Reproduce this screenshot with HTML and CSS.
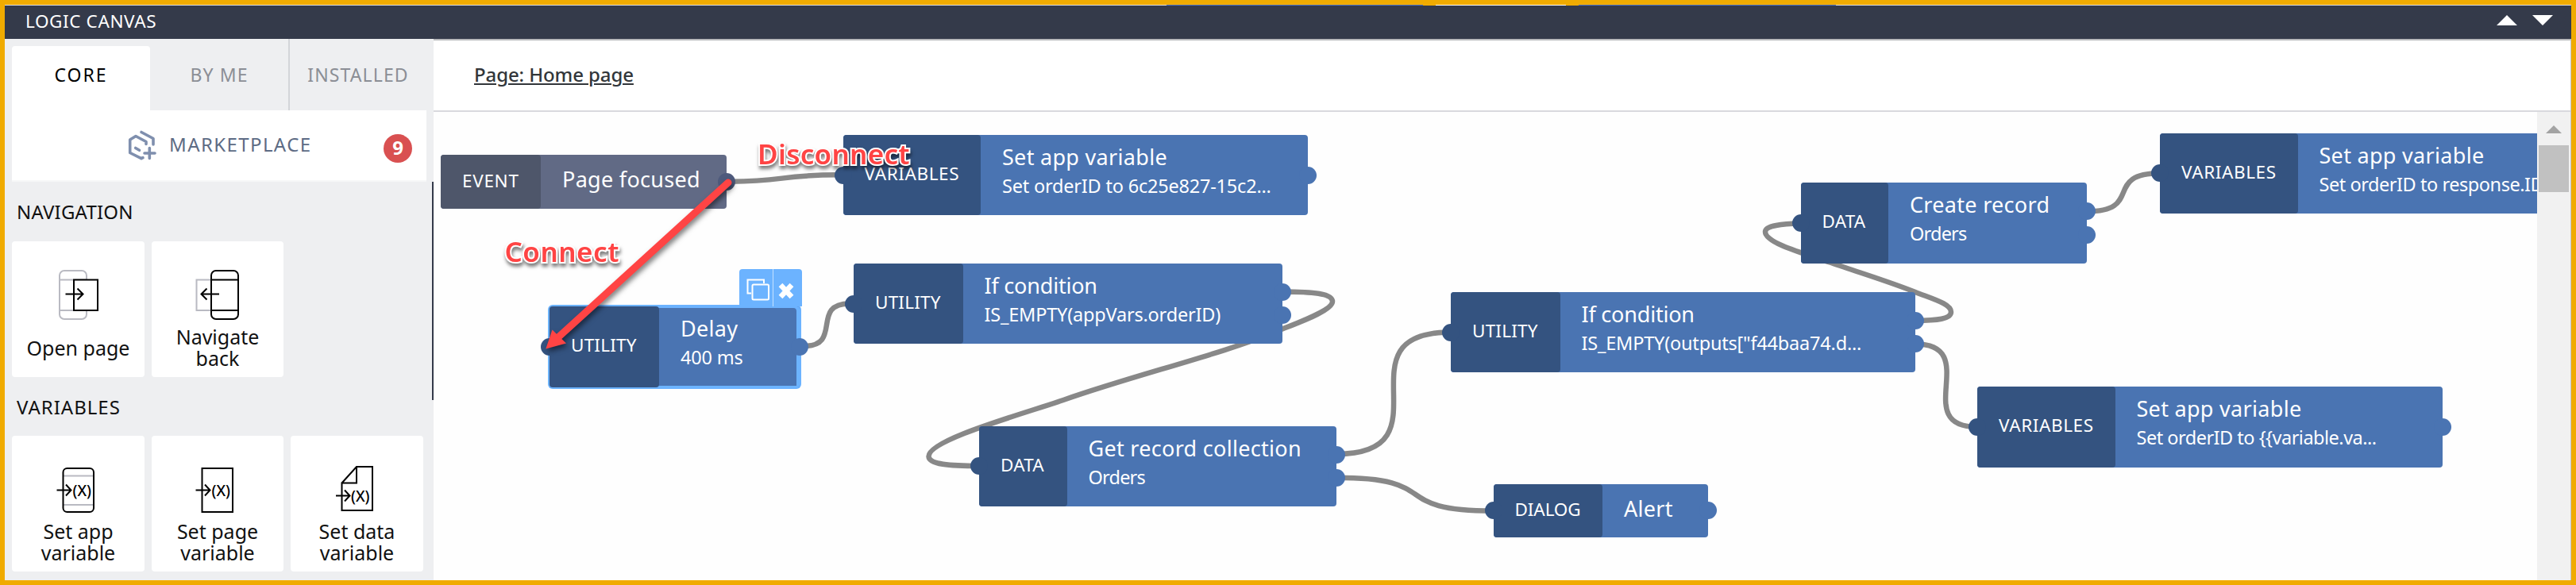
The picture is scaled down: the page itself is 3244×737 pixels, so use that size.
FILE: index.html
```html
<!DOCTYPE html>
<html lang="en">
<head>
<meta charset="utf-8">
<title>Logic canvas</title>
<link rel="stylesheet" href="styles.css">
</head>
<body>
<div class="app">
  <header class="topbar">
    <span class="topbar-title">LOGIC CANVAS</span>
    <svg class="topbar-arrows" width="72" height="13" viewBox="0 0 72 13"><path d="M0 13L13 0L26 13ZM45 0H71L58 13Z"/></svg>
  </header>
  <div class="body">
    <aside class="sidebar">
      <nav class="tabs">
        <div class="tab tab-active">CORE</div>
        <div class="tab">BY ME</div>
        <div class="tab tab-last">INSTALLED</div>
      </nav>
      <div class="market">
        <svg class="market-icon" width="36" height="38" viewBox="161 164 36 38"><path d="M178 166.500L193 174.500V182M184 181.500V178.500L171 171.500L163.700 176V192.500L178 199.700L180 198.700M170.700 186.500L175.500 189.300M182 193H195M188.300 186.500V199.500"/></svg>
        <span class="market-label">MARKETPLACE</span>
        <span class="badge">9</span>
      </div>
      <h2 class="section">NAVIGATION</h2>
      <div class="cards">
        <div class="card">
          <svg class="icon" width="167" height="107" viewBox="0 0 167 107">
            <g class="dim"><rect x="60" y="37" width="34" height="61" rx="6"/><path d="M60 48.500H94M60 87H94"/></g>
            <rect class="sheet" x="78" y="48.500" width="30" height="38.500"/><path d="M67.500 66.500H89.500M82.500 59.500L89.500 66.500L82.500 73.500"/>
          </svg>
          <div class="card-label">Open page</div>
        </div>
        <div class="card card-mid">
          <svg class="icon" width="166" height="107" viewBox="0 0 166 107">
            <path class="dim" d="M75 48.500H56.500V87H75"/>
            <rect x="75" y="37" width="34" height="61" rx="6"/><path d="M75 48.500H109M75 87H109M85 66.500H62.500M69.500 59.500L62.500 66.500L69.500 73.500"/>
          </svg>
          <div class="card-label">Navigate<br>back</div>
        </div>
      </div>
      <h2 class="section section-next">VARIABLES</h2>
      <div class="cards">
        <div class="card">
          <svg class="icon" width="167" height="107" viewBox="0 0 167 107">
            <path class="dim" d="M65 50.500H103M65 87H103"/>
            <rect x="64.500" y="41" width="38.500" height="55" rx="5"/><path d="M56.500 68.500H74M68 61.500L74.500 68.500L68 75.500"/>
            <text class="fx" x="76.500" y="75.500" textLength="23.500" lengthAdjust="spacingAndGlyphs">(X)</text>
          </svg>
          <div class="card-label">Set app<br>variable</div>
        </div>
        <div class="card card-mid">
          <svg class="icon" width="166" height="107" viewBox="0 0 166 107">
            <rect x="63.500" y="41" width="38.500" height="55"/><path d="M55.500 68.500H73M67 61.500L73.500 68.500L67 75.500"/>
            <text class="fx" x="75.500" y="75.500" textLength="23.500" lengthAdjust="spacingAndGlyphs">(X)</text>
          </svg>
          <div class="card-label">Set page<br>variable</div>
        </div>
        <div class="card">
          <svg class="icon" width="167" height="107" viewBox="0 0 167 107">
            <path d="M64.500 59.500L83 39H103V94H64.500V59.500H83V39M57 75.500H74M68 68.500L74.500 75.500L68 82.500"/>
            <text class="fx" x="76" y="82.500" textLength="23.500" lengthAdjust="spacingAndGlyphs">(X)</text>
          </svg>
          <div class="card-label">Set data<br>variable</div>
        </div>
      </div>
      <div class="sidebar-thumb"></div>
    </aside>
    <main class="main">
      <div class="crumb"><a class="crumb-link">Page: Home page</a></div>
      <div class="work">
        <div class="canvas">
          <svg class="wires" width="2649" height="590" viewBox="546 141 2649 590">
            <path d="M920 228.700C988 228.700 982 220.300 1055 220.300"/>
            <path d="M1012 436C1062 436 1020 382.500 1070 382.500"/>
            <path d="M1615 367.500C1655 367.500 1678 370 1678 380C1678 391 1636 406 1610 416.500C1540 446 1430 472 1339 504C1290 521 1169 554 1169.500 575C1170 585 1195 587 1233 587"/>
            <path d="M1683 572C1830 572 1680 418.500 1827 418.500"/>
            <path d="M1683 601.700C1820 601.700 1745 643.500 1880 643.500"/>
            <path d="M2411 404C2440 403.500 2457 402 2457 393C2457 383 2435 377 2412 368C2380 355 2340 343 2306 331C2270 319 2223 306 2223 292C2223 284 2245 282 2267 281.500"/>
            <path d="M2628 266.500C2700 266.500 2648 218.300 2720 218.300"/>
            <path d="M2411 433.300C2498 433.300 2404 538 2490 538"/>
          </svg>

          <div class="node node-event">
            <div class="kind">EVENT</div>
            <div class="info"><div class="title">Page focused</div></div>
            <i class="port port-out"></i>
          </div>
          <div class="node node-set1">
            <div class="kind">VARIABLES</div>
            <div class="info"><div class="title">Set app variable</div><div class="sub">Set orderID to 6c25e827-15c2...</div></div>
            <i class="port port-in"></i><i class="port port-out"></i>
          </div>
          <div class="node node-if1">
            <div class="kind">UTILITY</div>
            <div class="info"><div class="title title-if">If condition</div><div class="sub">IS_EMPTY(appVars.orderID)</div></div>
            <i class="port port-in"></i><i class="port port-yes"></i><i class="port port-no"></i>
          </div>
          <div class="node node-delay">
            <div class="kind">UTILITY</div>
            <div class="info"><div class="title">Delay</div><div class="sub">400 ms</div></div>
            <i class="port port-in"></i><i class="port port-out"></i>
            <div class="tools">
              <svg width="78" height="48" viewBox="0 0 78 48"><path class="tool-copy" d="M15 30.500H10.500V13.500H31V18"/><rect class="tool-copy" x="16.500" y="19.500" width="20.500" height="19" rx="1.500"/><path class="tool-line" d="M42.500 0V47"/><path class="tool-x" d="M52 20L66 35M66 20L52 35"/></svg>
            </div>
          </div>
          <div class="node node-get">
            <div class="kind">DATA</div>
            <div class="info"><div class="title">Get record collection</div><div class="sub sub-tight">Orders</div></div>
            <i class="port port-in"></i><i class="port port-yes"></i><i class="port port-no"></i>
          </div>
          <div class="node node-if2">
            <div class="kind">UTILITY</div>
            <div class="info"><div class="title title-if">If condition</div><div class="sub">IS_EMPTY(outputs["f44baa74.d...</div></div>
            <i class="port port-in"></i><i class="port port-yes"></i><i class="port port-no"></i>
          </div>
          <div class="node node-alert">
            <div class="kind">DIALOG</div>
            <div class="info"><div class="title">Alert</div></div>
            <i class="port port-in"></i><i class="port port-out"></i>
          </div>
          <div class="node node-create">
            <div class="kind">DATA</div>
            <div class="info"><div class="title">Create record</div><div class="sub sub-tight">Orders</div></div>
            <i class="port port-in"></i><i class="port port-yes"></i><i class="port port-no"></i>
          </div>
          <div class="node node-set2">
            <div class="kind">VARIABLES</div>
            <div class="info"><div class="title">Set app variable</div><div class="sub sub-id">Set orderID to response.ID...</div></div>
            <i class="port port-in"></i>
          </div>
          <div class="node node-set3">
            <div class="kind">VARIABLES</div>
            <div class="info"><div class="title">Set app variable</div><div class="sub sub-var">Set orderID to {{variable.va...</div></div>
            <i class="port port-in"></i><i class="port port-out"></i>
          </div>

          <svg class="arrow" width="2649" height="590" viewBox="546 141 2649 590"><path class="arrow-shaft" d="M917 230L704 424"/><path class="arrow-head" d="M687.300 439.500L695.500 415.500L713 432.500Z"/></svg>
          <span class="note note-disconnect">Disconnect</span>
          <span class="note note-connect">Connect</span>
        </div>
        <div class="scroll">
          <svg class="scroll-arrow" width="20" height="10" viewBox="0 0 20 10"><path d="M0 10L10 0L20 10Z"/></svg>
          <div class="scroll-thumb"></div>
        </div>
      </div>
    </main>
  </div>
</div>
</body>
</html>
```

FILE: styles.css
```css
* { box-sizing: border-box; }
body { margin: 0; font-family: "Noto Sans", sans-serif; background: #fff; }
.app { width: 3244px; height: 737px; border: 6px solid #f0ab00; display: flex; flex-direction: column; overflow: hidden; }

.topbar {
  height: 43px; flex: none; display: flex; align-items: center; justify-content: space-between;
  padding: 1px 22px 0 26px; background-color: #343a4a;
  background-image: linear-gradient(90deg, #dcdde2 1463px, #4a72c4 1463px 1786px, #f0ab00 1786px 1802px, #fff 1802px 1966px, #f0ab00 1966px 1982px, #4a72c4 1982px 2306px, #dcdde2 2306px);
  background-size: 100% 1px; background-repeat: no-repeat;
}
.topbar-title { color: #fff; font-size: 22.5px; letter-spacing: .6px; padding-bottom: 3px; }
.topbar-arrows { fill: #fff; margin-bottom: 5px; }

.body { flex: 1; display: flex; min-height: 0; }
.sidebar { position: relative; width: 540px; flex: none; background: #eeeff1; padding: 0 9px; }
.tabs { display: flex; height: 90px; }
.tab { width: 174px; padding-bottom: 1px; display: flex; align-items: center; justify-content: center; font-size: 23px; letter-spacing: 1.1px; color: #8b8e95; }
.tab-active { margin-top: 9px; padding-bottom: 9px; background: #fff; color: #000; border-radius: 4px 4px 0 0; letter-spacing: 2px; }
.tab-last { border-left: 2px solid #d3d5d9; }
.market { height: 90px; display: flex; align-items: center; background: #fff; border-bottom: 2px solid #f6f7f8; padding: 0 18px 0 146px; }
.market-icon { fill: none; stroke: #7f8fae; stroke-width: 3.6; stroke-linecap: round; stroke-linejoin: round; }
.market-label { margin-left: 16px; font-size: 24px; letter-spacing: 1.4px; color: #5d6b84; padding-bottom: 3px; }
.badge { margin: 8px 0 0 auto; width: 36px; height: 36px; border-radius: 50%; background: #d95051; color: #fff; font-size: 24px; font-weight: 700; line-height: 34px; text-align: center; }
.section { margin: 0; height: 75px; padding: 23px 0 0 6px; font-size: 24px; line-height: 30px; font-weight: 400; letter-spacing: .2px; color: #111; }
.section-next { height: 74px; letter-spacing: 1px; }
.cards { display: flex; gap: 9px; }
.card { width: 167px; height: 171px; background: #fff; border-radius: 4px; color: #111; }
.card-mid { width: 166px; }
.icon { display: block; fill: none; stroke: #000; stroke-width: 2; }
.icon .dim { stroke: #b9bac2; }
.icon .sheet { fill: #fff; }
.icon .fx { font: 500 20px "Noto Sans", sans-serif; fill: #000; stroke: none; }
.card-label { height: 54px; display: flex; flex-direction: column; justify-content: center; text-align: center; font-size: 25px; line-height: 27px; }
.sidebar-thumb { position: absolute; right: 0; top: 180px; width: 2px; height: 275px; background: #343a4a; }

.main { flex: 1; display: flex; flex-direction: column; min-width: 0; border-right: 1px solid #c3c4c8; }
.crumb { height: 92px; flex: none; border-top: 2px solid #b9babd; border-bottom: 2px solid #d9d9de; padding-left: 51px; display: flex; align-items: center; }
.crumb-link { font-size: 24px; color: #32363a; font-weight: 500; letter-spacing: -.1px; text-decoration: underline; text-decoration-thickness: 2px; text-underline-offset: 2px; padding-bottom: 4px; }
.work { flex: 1; display: flex; min-height: 0; }
.canvas { position: relative; flex: 1; overflow: hidden; background: #fefefe; }
.scroll { width: 42px; background: #f1f1f1; display: flex; flex-direction: column; align-items: center; padding-top: 17px; }
.scroll-arrow { fill: #a3a3a3; }
.scroll-thumb { width: 38px; height: 59px; margin-top: 15px; background: #c1c1c1; }

.wires, .arrow { position: absolute; left: 0; top: 0; fill: none; }
.wires { stroke: #888; stroke-width: 6.5; }
.arrow { filter: drop-shadow(2px 4px 3px rgba(0, 0, 0, .5)); }
.arrow-shaft { stroke: #ff4444; stroke-width: 9; stroke-linecap: round; }
.arrow-head { fill: #ff4444; }

.node { position: absolute; height: 101.5px; display: flex; background: #4a74b2; border-radius: 4px; color: #fff; white-space: nowrap; }
.kind { flex: none; background: #345380; border-radius: 4px; display: flex; align-items: center; padding: 0 0 4px 27px; font-size: 22.5px; letter-spacing: .2px; }
.info { padding: 11px 0 0 27px; }
.title { font-size: 27px; line-height: 34px; letter-spacing: .3px; }
.title-if { letter-spacing: -.2px; }
.sub { margin-top: 2px; font-size: 23.5px; line-height: 34px; letter-spacing: -.2px; }
.sub-tight { letter-spacing: -.8px; }
.sub-var { letter-spacing: -.5px; }
.sub-id { letter-spacing: -.45px; }
.port { position: absolute; width: 22px; height: 22px; border-radius: 50%; margin: -11px; background: #4a74b2; }
.port-in { left: 0; top: 50%; background: #345380; }
.port-out { left: 100%; top: 50%; }
.port-yes { left: 100%; top: 36px; }
.port-no { left: 100%; top: 65.500px; }

.node-event { left: 9px; top: 54px; width: 360px; height: 67.500px; background: #616a85; }
.node-event .kind { width: 126px; background: #4e566a; letter-spacing: .7px; padding-bottom: 2px; }
.node-event .info, .node-alert .info { padding-top: 14px; }
.node-event .port { background: #4e5a7c; }
.node-set1 { left: 515.500px; top: 28.800px; width: 585.500px; }
.node-set2 { left: 2174px; top: 26.500px; width: 585.500px; }
.node-set3 { left: 1944px; top: 346px; width: 585.500px; }
.node-set1 .kind, .node-set2 .kind, .node-set3 .kind { width: 173.500px; letter-spacing: .6px; }
.node-if1 { left: 529px; top: 190.800px; width: 540px; }
.node-if2 { left: 1281px; top: 226.800px; width: 584.500px; }
.node-if1 .kind, .node-if2 .kind, .node-alert .kind { width: 137.500px; }
.node-delay { left: 146px; top: 245px; width: 315px; box-shadow: 0 0 0 2px #6cb3ff, inset -4px 2px 0 #6cb3ff, inset 0 -2px 0 #6cb3ff; }
.node-delay .kind { width: 138px; }
.node-get { left: 687px; top: 395.500px; width: 450px; }
.node-get .kind, .node-create .kind { width: 110.500px; }
.node-alert { left: 1334.500px; top: 468.500px; width: 270px; height: 67.500px; }
.node-alert .kind { letter-spacing: -.1px; padding-bottom: 3px; }
.node-create { left: 1721.500px; top: 89.200px; width: 360px; }

.tools { position: absolute; right: -2.500px; top: -47.500px; width: 78.500px; height: 47.500px; background: #6cb3ff; border-radius: 4px 4px 0 0; }
.tools svg { display: block; fill: none; stroke: #fff; }
.tool-copy { stroke-width: 2; }
.tool-line { stroke-width: 1; opacity: .6; }
.tool-x { stroke-width: 6.500; }

.note { position: absolute; font-size: 35px; line-height: 48px; font-weight: 600; letter-spacing: .3px; color: #ff4444; -webkit-text-stroke: 4px #fff; paint-order: stroke fill; filter: drop-shadow(1px 4px 2px rgba(0, 0, 0, .5)); }
.note-disconnect { left: 408px; top: 29px; }
.note-connect { left: 89.5px; top: 152px; letter-spacing: .5px; }
```
